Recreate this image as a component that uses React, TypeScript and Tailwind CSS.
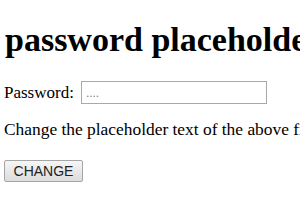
export default function App() {
  return (
    <div className="min-h-screen bg-white pl-1 text-black font-['Liberation_Serif','Times_New_Roman',serif] overflow-hidden">
      <h1 className="mt-5 mb-[22px] pl-px text-[34px] font-bold leading-[39px] whitespace-nowrap">
        password placeholder
      </h1>

      <p className="mb-[15px] flex h-[23px] items-end whitespace-nowrap text-[17px]">
        <label htmlFor="pwd" className="mb-[3px] leading-none">
          Password:
        </label>
        <input
          id="pwd"
          type="password"
          placeholder="...."
          className="ml-[7px] h-[23px] w-[186px] border border-[#a9a9a9] bg-white px-1 text-[13px] outline-none placeholder:text-[#8a8a8a]"
        />
      </p>

      <p className="mb-5 whitespace-nowrap text-[17.4px] leading-5">
        Change the placeholder text of the above field.
      </p>

      <button className="h-[22px] w-[79px] rounded-[2px] border border-[#a6a6a6] bg-gradient-to-b from-[#f6f6f6] to-[#dcdcdc] font-['Liberation_Sans',Arial,sans-serif] text-[14px] leading-none text-[#222]">
        CHANGE
      </button>
    </div>
  )
}
